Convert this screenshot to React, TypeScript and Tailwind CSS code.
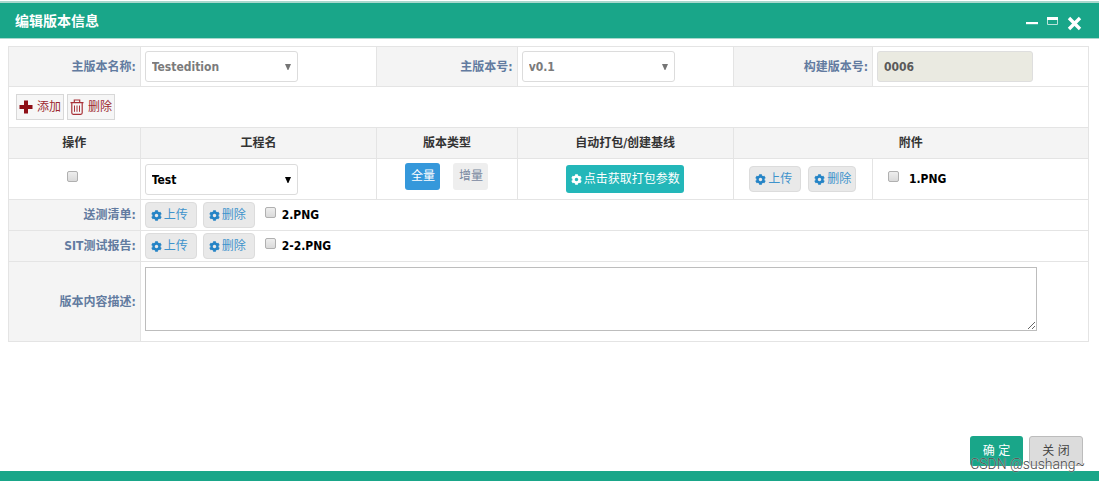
import { useState } from "react";
import type { ReactNode } from "react";
import { FaCog } from "react-icons/fa";

const cell = "border border-[#e4e4e4] p-0 font-bold";
const labelCell = cell + " bg-[#f4f4f4] pr-1 text-right text-[#627ba0]";
const headCell = cell + " bg-[#f4f4f4] text-center text-[#333]";

function Select({ id, label, options, disabled }: { id: string; label?: string; options: string[]; disabled?: boolean }) {
  return (
    <div className="relative ml-1 w-[153px]">
      <select
        id={id}
        aria-label={label}
        disabled={disabled}
        className="block h-[31px] w-full appearance-none rounded-[3px] border border-[#dcdcdc] bg-white pl-1.5 pr-6 pt-px text-[12px] font-bold text-black disabled:text-[#7b7b7b] disabled:opacity-100"
      >
        {options.map((o) => (
          <option key={o}>{o}</option>
        ))}
      </select>
      <svg
        viewBox="0 0 6 6"
        className={"pointer-events-none absolute right-[7px] top-[13px] size-[6px] " + (disabled ? "text-[#757575]" : "text-black")}
      >
        <path d="M0 0H6L3.4 6H2.6Z" fill="currentColor" />
      </svg>
    </div>
  );
}

function Check({ label, id }: { label: string; id: string }) {
  return (
    <input
      id={id}
      type="checkbox"
      aria-label={label}
      className="size-[11px] shrink-0 appearance-none rounded-[2px] border border-[#b0b0b0] bg-linear-to-b from-[#eeeeee] to-[#dadada] checked:bg-[#3598db] checked:bg-none"
    />
  );
}

function GearButton({ children, narrow }: { children: ReactNode; narrow?: boolean }) {
  return (
    <button
      type="button"
      className={
        "flex h-[26px] items-center gap-[2px] rounded-[4px] border border-[#dcdcdc] bg-[#e9e9e9] pl-[5px] text-[12px] font-normal text-[#3e93cc] " +
        (narrow ? "w-[48px]" : "w-[52px]")
      }
    >
      <FaCog className="size-[11px] shrink-0 text-[#2584c6]" />
      <span className="shrink-0">{children}</span>
    </button>
  );
}

function FileRow({ label, file, id }: { label: string; file: string; id: string }) {
  return (
    <tr className="h-[31px]">
      <th scope="row" className={labelCell}>{label}</th>
      <td colSpan={5} className={cell}>
        <div className="flex items-center pl-1">
          <GearButton>上传</GearButton>
          <div className="ml-1.5">
            <GearButton>删除</GearButton>
          </div>
          <div className="ml-2.5 flex items-start gap-1.5">
            <Check id={id} label={file} />
            <label htmlFor={id} className="text-black">{file}</label>
          </div>
        </div>
      </td>
    </tr>
  );
}

function PlusIcon() {
  return (
    <svg viewBox="0 0 14 14" className="size-[14px] shrink-0" fill="#8e0f16">
      <path d="M5 0.5H9V5H13.5V9H9V13.5H5V9H0.5V5H5Z" />
    </svg>
  );
}

function TrashIcon() {
  return (
    <svg viewBox="0 0 14 16" className="h-[16px] w-[14px] shrink-0" fill="none" stroke="#a83238" strokeWidth="1.2">
      <path d="M0.5 3.6H13.5M4.3 3.4V1H9.7V3.4M1.8 4V13.8Q1.8 15.3 3.2 15.3H10.8Q12.2 15.3 12.2 13.8V4" />
      <path d="M4.5 6.5V12.8M7 6.5V12.8M9.5 6.5V12.8" strokeWidth="1" />
    </svg>
  );
}

export default function App() {
  const [kind, setKind] = useState("full");
  const active = "bg-[#3598db] text-white";
  const idle = "bg-[#eeeeee] text-[#7888a0]";
  const tool = "flex h-[26px] w-[48px] items-center justify-center gap-1 border border-[#d8d8d8] bg-[#f6f6f6] font-normal text-[#9c2930]";
  return (
    <div className="relative flex min-h-screen flex-col bg-white font-['DejaVu_Sans_Condensed','Noto_Sans_CJK_SC',sans-serif] text-[12px] leading-[16px]">
      <header className="mt-px flex h-[38px] items-center justify-between border-y border-t-2 border-[#a9d8cd] bg-[#19a689] pl-[15px] pr-[17px] text-white">
        <h1 className="text-[14px] font-bold">编辑版本信息</h1>
        <div className="flex items-center gap-[9px]">
          <button type="button" aria-label="最小化">
            <svg viewBox="0 0 12 12" className="mt-1 size-[12px]">
              <path d="M0 5H12V7.2H0Z" fill="#fff" />
            </svg>
          </button>
          <button type="button" aria-label="最大化">
            <svg viewBox="0 0 11 8" className="h-[8px] w-[11px]">
              <path d="M0.5 0.5H10.5V7.5H0.5Z" fill="none" stroke="#b9e3da" />
              <path d="M0 0H11V3H0Z" fill="#fff" />
            </svg>
          </button>
          <button type="button" aria-label="关闭窗口">
            <svg viewBox="0 0 15 15" className="mt-1.5 size-[15px]">
              <path d="M2 2L13 13M13 2L2 13" stroke="#fff" strokeWidth="3.4" />
            </svg>
          </button>
        </div>
      </header>

      <main className="flex-1 pl-2 pr-2.5 pt-[7px]">
        <table className="w-full table-fixed border-collapse">
          <colgroup>
            <col className="w-[12.2%]" />
            <col className="w-[21.9%]" />
            <col className="w-[13%]" />
            <col className="w-[20%]" />
            <col className="w-[12.9%]" />
            <col className="w-[20%]" />
          </colgroup>
          <tbody>
            <tr className="h-[40px]">
              <th scope="row" className={labelCell}><label htmlFor="edition">主版本名称:</label></th>
              <td className={cell}><Select id="edition" options={["Testedition"]} disabled /></td>
              <th scope="row" className={labelCell}><label htmlFor="version">主版本号:</label></th>
              <td className={cell}><Select id="version" options={["v0.1"]} disabled /></td>
              <th scope="row" className={labelCell}><label htmlFor="build">构建版本号:</label></th>
              <td className={cell}>
                <input
                  id="build"
                  readOnly
                  defaultValue="0006"
                  className="ml-1 block h-[31px] w-[156px] rounded-[3px] border border-[#dedede] bg-[#eaeae1] px-1.5 pt-px text-[12px] font-bold text-[#5a5a5a]"
                />
              </td>
            </tr>
            <tr className="h-[41px]">
              <td colSpan={6} className={cell}>
                <div className="flex gap-[3px] pl-[7px]">
                  <button type="button" className={tool}>
                    <PlusIcon />
                    <span className="shrink-0">添加</span>
                  </button>
                  <button type="button" className={tool}>
                    <TrashIcon />
                    <span className="shrink-0">删除</span>
                  </button>
                </div>
              </td>
            </tr>
            <tr className="h-[31px]">
              <th scope="col" className={headCell}>操作</th>
              <th scope="col" className={headCell}>工程名</th>
              <th scope="col" className={headCell}>版本类型</th>
              <th scope="col" className={headCell}>自动打包/创建基线</th>
              <th scope="col" colSpan={2} className={headCell}>附件</th>
            </tr>
            <tr className="h-[41px]">
              <td className={cell}>
                <div className="flex justify-center pb-1.5 pr-1"><Check id="row" label="选择" /></div>
              </td>
              <td className={cell}><Select id="project" label="工程名" options={["Test"]} /></td>
              <td className={cell}>
                <div className="flex justify-center gap-[13px] pb-1.5">
                  <button type="button" onClick={() => setKind("full")} className={"h-[27px] w-[35px] rounded-[3px] font-normal " + (kind === "full" ? active : idle)}>全量</button>
                  <button type="button" onClick={() => setKind("delta")} className={"h-[27px] w-[35px] rounded-[3px] font-normal " + (kind === "delta" ? active : idle)}>增量</button>
                </div>
              </td>
              <td className={cell}>
                <button type="button" className="mx-auto flex h-[28px] w-[118px] items-center justify-center gap-[2px] rounded-[3px] bg-[#23b7b9] font-normal text-white">
                  <FaCog className="size-[11px] shrink-0" />
                  <span className="shrink-0">点击获取打包参数</span>
                </button>
              </td>
              <td className={cell}>
                <div className="flex justify-center gap-[7px]">
                  <GearButton>上传</GearButton>
                  <GearButton narrow>删除</GearButton>
                </div>
              </td>
              <td className={cell}>
                <div className="flex items-start gap-2.5 pl-[15px]">
                  <Check id="file1" label="1.PNG" />
                  <label htmlFor="file1" className="text-black">1.PNG</label>
                </div>
              </td>
            </tr>
            <FileRow id="file2" label="送测清单:" file="2.PNG" />
            <FileRow id="file3" label="SIT测试报告:" file="2-2.PNG" />
            <tr className="h-[80px]">
              <th scope="row" className={labelCell}><label htmlFor="desc">版本内容描述:</label></th>
              <td colSpan={5} className={cell + " align-top"}>
                <textarea id="desc" className="ml-1 mt-[5px] block h-[64px] w-[94.2%] border border-[#bdbdbd] bg-white p-1" />
              </td>
            </tr>
          </tbody>
        </table>
      </main>

      <div className="flex justify-end gap-1.5 pb-[5px] pr-4">
        <button type="button" className="h-[30px] w-[53px] rounded-[3px] bg-[#19a689] text-white">确 定</button>
        <button type="button" className="h-[30px] w-[54px] rounded-[3px] border border-[#bcbcbc] bg-[#dcdcdc] text-[#444]">关 闭</button>
      </div>
      <footer className="h-[10px] bg-[#19a689]" />
      <span className="pointer-events-none absolute bottom-2 right-[14px] font-['Roboto',sans-serif] text-[14px] font-light leading-[18px] text-[#444] [text-shadow:0_0_1px_#fff]">
        CSDN @sushang~
      </span>
    </div>
  );
}
